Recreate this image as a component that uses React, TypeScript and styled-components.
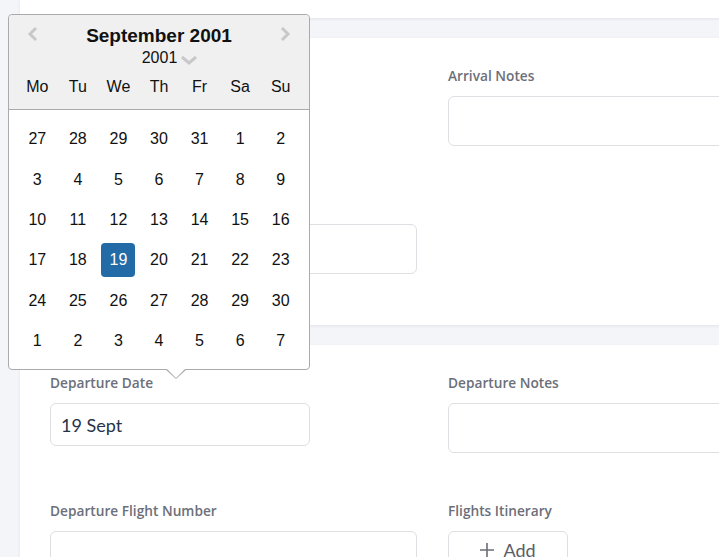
import * as React from 'react';
import styled, { createGlobalStyle } from 'styled-components';

const GlobalStyle = createGlobalStyle`
  html, body {
    margin: 0;
    padding: 0;
    background: #f4f5f8;
    overflow: hidden;
  }
  body {
    font-family: Lato, 'Open Sans', sans-serif;
  }
`;

const Page = styled.div`
  position: relative;
  width: 719px;
  height: 557px;
  overflow: hidden;
  padding-left: 20px;
  box-sizing: border-box;
`;

const Stack = styled.div`
  display: flex;
  flex-direction: column;
  gap: 20px;
  width: 880px;
`;

const Card = styled.section<{ $stub?: boolean }>`
  background: #fff;
  box-shadow: 0 1px 3px rgba(20, 30, 60, 0.08);
  padding: ${(p) => (p.$stub ? '0' : '30px 30px 51px')};
  height: ${(p) => (p.$stub ? '18px' : 'auto')};
  display: ${(p) => (p.$stub ? 'block' : 'grid')};
  grid-template-columns: 367px 367px;
  column-gap: 31px;
  row-gap: 50px;
`;

const Field = styled.div`
  display: flex;
  flex-direction: column;
`;

const Label = styled.label`
  font-family: 'Open Sans', sans-serif;
  font-size: 13.7px;
  font-weight: 600;
  line-height: 16px;
  height: 16px;
  color: #6c6f7a;
  margin-bottom: 12px;
`;

const Input = styled.div<{ $w?: number; $h?: number }>`
  box-sizing: border-box;
  width: ${(p) => (p.$w ? `${p.$w}px` : '100%')};
  height: ${(p) => p.$h ?? 50}px;
  border: 1px solid #dedfe2;
  border-radius: 6px;
  background: #fff;
  padding: 0 10px;
  display: flex;
  align-items: center;
  font-size: 18px;
  color: #27324a;
`;

const AddButton = styled.button`
  box-sizing: border-box;
  width: 120px;
  height: 44px;
  border: 1px solid #dedfe2;
  border-radius: 6px;
  background: #fff;
  display: flex;
  align-items: center;
  justify-content: center;
  gap: 9px;
  font-family: Lato, sans-serif;
  font-size: 18px;
  color: #5b5e68;
  padding: 0 0 7px;
`;

/* ---------- date picker popup ---------- */

const Picker = styled.div`
  position: absolute;
  left: 8px;
  top: 14px;
  width: 302px;
  box-sizing: border-box;
  border: 1px solid #aaa;
  border-radius: 4px;
  background: #fff;
  font-family: 'Liberation Sans', Arial, sans-serif;
  color: #111;
  z-index: 5;

  &::before,
  &::after {
    content: '';
    position: absolute;
    border-style: solid;
    border-color: transparent;
  }
  &::before {
    top: 100%;
    left: 156px;
    border-width: 10px 11px 0;
    border-top-color: #aaa;
  }
  &::after {
    top: 100%;
    margin-top: -1px;
    left: 157px;
    border-width: 10px 10px 0;
    border-top-color: #fff;
  }
`;

const PickerHead = styled.div`
  position: relative;
  background: #f0f0f0;
  border-bottom: 1px solid #aaa;
  border-radius: 4px 4px 0 0;
  padding: 10px 8px 0;
  height: 95px;
  box-sizing: border-box;
  display: flex;
  flex-direction: column;
  align-items: center;
`;

const Title = styled.div`
  font-size: 19px;
  font-weight: 700;
  line-height: 22px;
`;

const YearRow = styled.div`
  display: flex;
  align-items: center;
  gap: 3px;
  font-size: 16px;
  line-height: 20px;
  margin-top: 1px;
  margin-left: 22px;

  svg {
    margin-top: 3px;
  }
`;

const NavArrow = styled.span<{ $side: 'left' | 'right' }>`
  position: absolute;
  top: 11px;
  ${(p) => (p.$side === 'left' ? 'left: 18px;' : 'right: 18px;')}
  display: flex;
`;

const Week = styled.div`
  display: grid;
  grid-template-columns: repeat(7, 1fr);
  width: 100%;
  margin-top: 9px;
  font-size: 16px;
  line-height: 20px;
  text-align: center;
`;

const Days = styled.div`
  display: grid;
  grid-template-columns: repeat(7, 1fr);
  grid-auto-rows: 40.4px;
  padding: 9px 8px 8px;
  font-size: 16px;
`;

const Day = styled.div<{ $active?: boolean }>`
  display: flex;
  align-items: center;
  justify-content: center;

  span {
    width: 34px;
    height: 34px;
    display: flex;
    align-items: center;
    justify-content: center;
    border-radius: 4px;
    background: ${(p) => (p.$active ? '#226ba6' : 'transparent')};
    color: ${(p) => (p.$active ? '#fff' : '#111')};
  }
`;

const Chevron = ({ dir }: { dir: 'left' | 'right' | 'down' }) => {
  const d =
    dir === 'left' ? 'M9 2 L3 8 L9 14' : dir === 'right' ? 'M3 2 L9 8 L3 14' : 'M2 3 L9 9 L16 3';
  const w = dir === 'down' ? 18 : 12;
  const h = dir === 'down' ? 12 : 16;
  return (
    <svg width={w} height={h} viewBox={`0 0 ${w} ${h}`}>
      <path d={d} fill="none" stroke="#c8c8c8" strokeWidth={3} />
    </svg>
  );
};

const weeks = [
  [27, 28, 29, 30, 31, 1, 2],
  [3, 4, 5, 6, 7, 8, 9],
  [10, 11, 12, 13, 14, 15, 16],
  [17, 18, 19, 20, 21, 22, 23],
  [24, 25, 26, 27, 28, 29, 30],
  [1, 2, 3, 4, 5, 6, 7],
];

const DatePicker = () => (
  <Picker>
    <PickerHead>
      <NavArrow $side="left">
        <Chevron dir="left" />
      </NavArrow>
      <NavArrow $side="right">
        <Chevron dir="right" />
      </NavArrow>
      <Title>September 2001</Title>
      <YearRow>
        2001
        <Chevron dir="down" />
      </YearRow>
      <Week>
        {['Mo', 'Tu', 'We', 'Th', 'Fr', 'Sa', 'Su'].map((d) => (
          <div key={d}>{d}</div>
        ))}
      </Week>
    </PickerHead>
    <Days>
      {weeks.map((w, i) =>
        w.map((n, j) => (
          <Day key={`${i}-${j}`} $active={i === 3 && n === 19}>
            <span>{n}</span>
          </Day>
        ))
      )}
    </Days>
  </Picker>
);

const App = () => {
  return (
    <Page>
      <GlobalStyle />
      <Stack>
        <Card $stub />
        <Card>
          {/* this field sits under the open picker, so its label is left blank */}
          <Field>
            <Label />
            <Input $w={259} $h={42} />
          </Field>
          <Field>
            <Label>Arrival Notes</Label>
            <Input />
          </Field>
          <Field>
            <Label />
            <Input />
          </Field>
        </Card>
        <Card>
          <Field>
            <Label>Departure Date</Label>
            <Input $w={260} $h={43}>19 Sept</Input>
          </Field>
          <Field>
            <Label>Departure Notes</Label>
            <Input />
          </Field>
          <Field>
            <Label>Departure Flight Number</Label>
            <Input />
          </Field>
          <Field>
            <Label>Flights Itinerary</Label>
            <AddButton>
              <svg width="14" height="14" viewBox="0 0 14 14">
                <path d="M7 0 V14 M0 7 H14" stroke="#6a6d77" strokeWidth="1.6" />
              </svg>
              Add
            </AddButton>
          </Field>
        </Card>
      </Stack>
      <DatePicker />
    </Page>
  );
};

export default App;
